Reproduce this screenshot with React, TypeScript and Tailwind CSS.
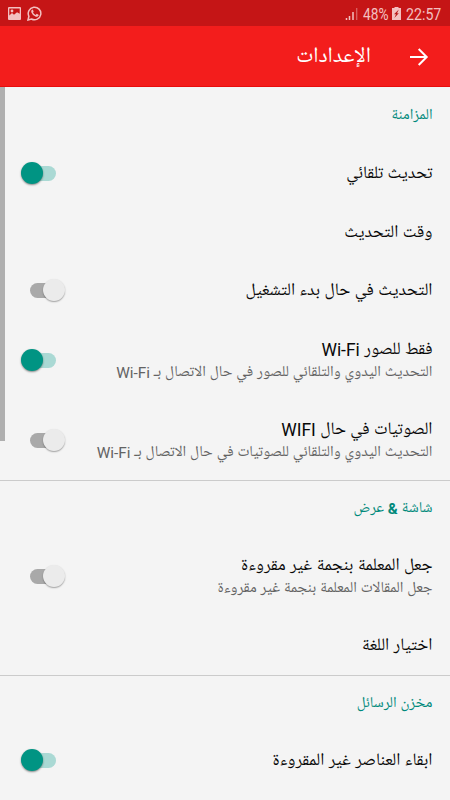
import React from 'react';

const FONT = "font-['Roboto','Noto_Naskh_Arabic_UI','Noto_Naskh_Arabic','Noto_Sans_Arabic','DejaVu_Sans',sans-serif]";

function Toggle({ on }: { on: boolean }) {
  return on ? (
    <div className="relative -mt-px ml-[21.400px] h-[22px] w-[34.300px] shrink-0">
      <div className="absolute top-[4px] right-0 h-[15px] w-[28px] rounded-full bg-[#aad9d4]" />
      <div className="absolute top-0 left-0 size-[22px] rounded-full bg-[#009483] shadow-[0_1px_2px_rgba(0,0,0,0.45)]" />
    </div>
  ) : (
    <div className="relative -mt-px ml-[30px] h-[22px] w-[34.700px] shrink-0">
      <div className="absolute top-[4px] left-0 h-[15px] w-[28px] rounded-full bg-[#a9a9a9]" />
      <div className="absolute top-0 right-0 size-[22px] rounded-full bg-[#ebebeb] shadow-[0_1px_1.5px_rgba(0,0,0,0.35)]" />
    </div>
  );
}

function Row({ title, sub, on, height = 'h-[59px]' }: { title: string; sub?: string; on?: boolean; height?: string }) {
  return (
    <div className={`flex shrink-0 items-center justify-between pr-[17.500px] ${height}`}>
      <div className="flex flex-col pt-[2px]">
        <span className="text-[17.450px] leading-[23px] whitespace-nowrap text-[#080808]">{title}</span>
        {sub && <span className="text-[15.350px] leading-[22px] whitespace-nowrap text-[#636363]">{sub}</span>}
      </div>
      {on !== undefined && <Toggle on={on} />}
    </div>
  );
}

function Section({ children, height = 'h-[55px]' }: { children: React.ReactNode; height?: string }) {
  return (
    <div className={`flex shrink-0 items-center pt-[2px] pr-[17.500px] text-[15.200px] text-[#00897b] ${height}`}>
      <span className="whitespace-nowrap">{children}</span>
    </div>
  );
}

function StatusBar() {
  return (
    <div dir="ltr" className="flex h-[26px] shrink-0 items-center justify-between bg-[#c51516] pr-[9px] pl-[8px] text-[#f3c0c0]">
      <div className="flex items-center gap-[6px] pt-[1px]">
        <svg width="13" height="13" viewBox="0 0 13 13">
          <path fill="currentColor" fillRule="evenodd" d="M1 0h11q1 0 1 1v11q0 1-1 1H1q-1 0-1-1V1q0-1 1-1zM1.300 1.500V8.500L4 6l2 1.800 3-2.500 2.700 1.500V1.500z" />
          <circle cx="4" cy="4" r="1.400" fill="currentColor" />
        </svg>
        <svg width="15" height="15" viewBox="0 0 15 15">
          <path d="M1 14l.9-3.700A6.300 6.300 0 1 1 4.500 13z" fill="none" stroke="currentColor" strokeWidth="1.500" />
          <path d="M4.700 4q.8-.8 1.300 0l.6 1.400q0 .5-.6 1 .9 1.800 2.700 2.500l.8-.9q.3-.3.7 0l1.300.7q.3.300 0 1-.8 1.500-2.600 1Q5.300 9.500 4.300 6.300 4 5 4.700 4z" fill="currentColor" />
        </svg>
      </div>
      <div className="flex items-center pt-[3px]">
        <svg width="13" height="13" viewBox="0 0 13 13" className="mr-[5px] mb-[2px]">
          <path d="M1.500 11v2M4.500 9v4M8 5v8" stroke="currentColor" strokeWidth="1.500" />
          <path d="M11.700 1v12" stroke="currentColor" strokeWidth="1.300" opacity=".45" />
        </svg>
        <span className="w-[26px] text-[16.500px] leading-[20px]"><span className="inline-block origin-left scale-x-[0.83]">48%</span></span>
        <svg width="9" height="13" viewBox="0 0 9 13" className="mr-[5px] mb-[2px] ml-[3px]">
          <path fill="currentColor" d="M2.500 0h4v1H9v12H0V1h2.500z" />
          <path fill="#b91b1c" d="M6.800 2.500L2 7.200h2L2.300 11l4.500-4.700H5z" />
        </svg>
        <span className="w-[35px] text-[16.500px] leading-[20px]"><span className="inline-block origin-left scale-x-[0.86]">22:57</span></span>
      </div>
    </div>
  );
}

export default function App() {
  return (
    <div dir="rtl" className={`relative flex h-[800px] w-[450px] flex-col overflow-hidden bg-[#f4f4f4] ${FONT}`}>
      <StatusBar />
      <header className="flex h-[61px] shrink-0 items-center border-b border-[#e80d0d] bg-[#f31d1c] pr-[21px] text-white">
        <svg width="20" height="20" viewBox="0 0 20 20" className="mt-[2px] shrink-0" fill="none" stroke="currentColor" strokeWidth="2">
          <path d="M1 10h16.500M9.700 2l8 8-8 8" />
        </svg>
        <h1 className="mt-[4px] mr-[38px] text-[22px] leading-[28px] whitespace-nowrap">الإعدادات</h1>
      </header>
      <Section height="h-[57px]">المزامنة</Section>
      <Row title="تحديث تلقائي" on />
      <Row title="وقت التحديث" height="h-[58px]" />
      <Row title="التحديث في حال بدء التشغيل" on={false} />
      <Row title="فقط للصور Wi-Fi" sub="التحديث اليدوي والتلقائي للصور في حال الاتصال بـ Wi-Fi" on height="h-[80px]" />
      <Row title="الصوتيات في حال WIFI" sub="التحديث اليدوي والتلقائي للصوتيات في حال الاتصال بـ Wi-Fi" on={false} height="h-[80px]" />
      <div className="h-px shrink-0 bg-[#cbcbcb]" />
      <Section>شاشة <span className="font-bold">&amp;</span> عرض</Section>
      <Row title="جعل المعلمة بنجمة غير مقروءة" sub="جعل المقالات المعلمة بنجمة غير مقروءة" on={false} height="h-[80px]" />
      <Row title="اختيار اللغة" />
      <div className="h-px shrink-0 bg-[#cbcbcb]" />
      <Section>مخزن الرسائل</Section>
      <Row title="ابقاء العناصر غير المقروءة" on />
      <div className="absolute top-[87px] left-0 h-[354px] w-[5px] bg-[#afafaf]" />
    </div>
  );
}
